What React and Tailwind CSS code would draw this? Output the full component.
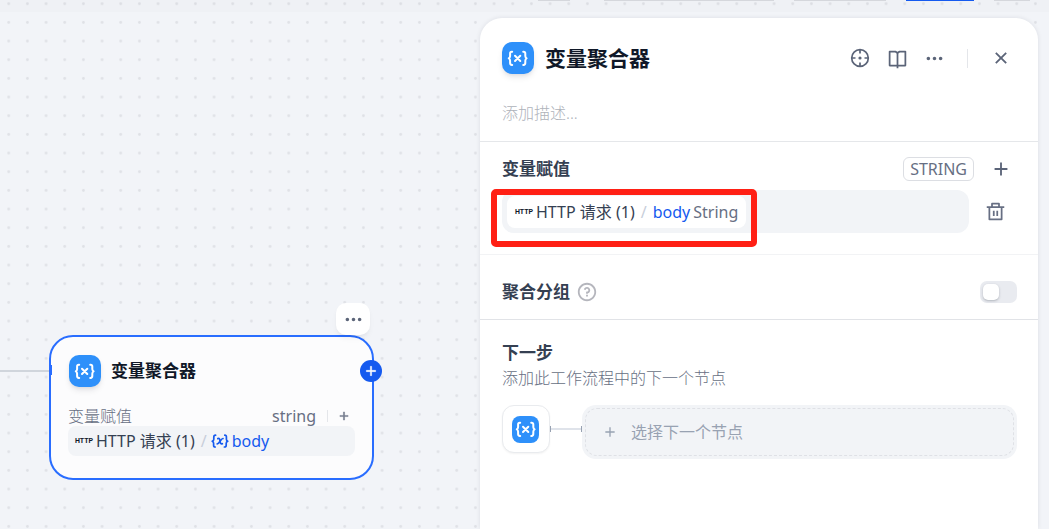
import React from "react";
import {
  RiAddLine,
  RiBookOpenLine,
  RiCloseLine,
  RiDeleteBinLine,
  RiMoreFill,
  RiQuestionLine,
} from "react-icons/ri";

function AggregatorIcon({ className, viewBox = "0 0 32 32" }) {
  return (
    <svg viewBox={viewBox} className={className} fill="none" stroke="white" strokeWidth="2" strokeLinecap="round" strokeLinejoin="round" aria-hidden="true">
      <path d="M10.2 9.7H9.8C8.6 9.7 8.1 10.4 8.1 11.5V13.9C8.1 15.2 7.5 15.8 6.8 16.3C7.5 16.8 8.1 17.4 8.1 18.7V21.1C8.1 22.2 8.6 22.9 9.8 22.9H10.2" />
      <path d="M21.2 9.7H21.6C22.8 9.7 23.3 10.4 23.3 11.5V13.9C23.3 15.2 23.9 15.8 24.6 16.3C23.9 16.8 23.3 17.4 23.3 18.7V21.1C23.3 22.2 22.8 22.9 21.6 22.9H21.2" />
      <path d="M13 13.7L18.3 19M18.3 13.7L13 19" />
    </svg>
  );
}

function VariableIcon() {
  return (
    <svg viewBox="0 0 18 16" className="h-4 w-[18px] shrink-0" fill="none" stroke="currentColor" strokeWidth="1.7" strokeLinecap="round" strokeLinejoin="round" aria-hidden="true">
      <path d="M4.6 2.2C3.2 2.2 2.8 2.9 2.8 4V6.2C2.8 7.2 2.2 7.8 1.2 8.2C2.2 8.6 2.6 9.2 2.6 10.2V12.2C2.6 13.3 3 14 4.2 14" />
      <path d="M13.8 2.2C15.1 2.2 15.5 2.9 15.4 4V6.2C15.4 7.2 15.8 7.8 16.8 8.2C15.8 8.6 15.2 9.2 15.2 10.2V12.2C15.2 13.3 14.8 14 13.4 14" />
      <path d="M6.8 5.6C8.4 5 8.7 6 9 8C9.3 10 9.7 11.4 11.4 10.7M12 5.5C10.2 5.2 8.2 11.2 6.2 10.8" />
    </svg>
  );
}

function LocateIcon() {
  return (
    <svg viewBox="0 0 22 22" className="h-[22px] w-[22px]" fill="none" stroke="currentColor" strokeWidth="1.7" aria-hidden="true">
      <circle cx="11" cy="11" r="8.3" />
      <path d="M11 2.7V6.5M11 15.5V19.3M2.7 11H6.5M15.5 11H19.3" />
      <circle cx="11" cy="11" r="1.6" fill="currentColor" stroke="none" />
    </svg>
  );
}

function HttpMark() {
  return <span className="flex w-[18px] shrink-0 justify-center font-[Roboto,sans-serif] text-[7px] leading-4 font-bold text-[#101828]">HTTP</span>;
}

function DotGrid() {
  return (
    <svg className="absolute inset-0 h-full w-full" aria-hidden="true">
      <defs>
        <pattern id="dots" x="-0.6" y="-5.6" width="18.667" height="18.667" patternUnits="userSpaceOnUse">
          <circle cx="9.33" cy="9.33" r="1.4" fill="#dfe1e6" />
        </pattern>
      </defs>
      <rect width="100%" height="100%" fill="url(#dots)" />
    </svg>
  );
}

function ToolbarEdge() {
  return (
    <div className="absolute top-0 right-0 left-0 flex h-3 items-start justify-end bg-[#101828]/1 pr-[19px]">
      <div className="mr-[34px] h-px w-8 bg-[#d5d7dc]" />
      <div className="mr-5 h-px w-[170px] bg-[#d5d7dc]" />
      <div className="mr-5 h-px w-[92px] bg-[#d5d7dc]" />
      <div className="mr-5 h-px w-[68px] bg-[#155aef]" />
      <div className="h-px w-9 bg-[#d5d7dc]" />
    </div>
  );
}

function AggregatorNode() {
  return (
    <article className="absolute top-[335px] left-[49px] w-[325px] rounded-[24px] border-2 border-[#296dff] bg-[#fcfcfd] px-[17px] pt-[18px] pb-[22px]">
      <span className="absolute top-[28px] -left-[2px] h-[10px] w-[3px] bg-[#296dff]" />
      <button aria-label="更多操作" className="absolute -top-[34px] right-[2px] flex h-8 w-[34px] items-center justify-center rounded-[10px] bg-white text-[#5b6478] shadow-md shadow-gray-900/5">
        <RiMoreFill size={21} />
      </button>
      <button aria-label="添加节点" className="absolute top-[23px] -right-[10px] flex h-[22px] w-[22px] items-center justify-center rounded-full bg-[#155aef] text-white">
        <RiAddLine size={16} strokeWidth="0.6" stroke="currentColor" />
      </button>
      <header className="flex items-center gap-[10px] pl-px">
        <span className="rounded-[10px] bg-[#2e90fa] shadow-md shadow-gray-900/10">
          <AggregatorIcon className="h-8 w-8" />
        </span>
        <h3 className="text-[17px] leading-6 font-bold text-[#101828]">变量聚合器</h3>
      </header>
      <div className="mt-[18px] flex h-[21px] items-center text-base text-[#676f83]">
        <span className="flex-1 font-light">变量赋值</span>
        <span>string</span>
        <span className="ml-[11px] h-3 w-px bg-[#e4e6ea]" />
        <button aria-label="添加变量" className="mr-1 ml-[9px]">
          <RiAddLine size={14} strokeWidth="0.6" stroke="currentColor" />
        </button>
      </div>
      <div className="flex h-[30px] items-center rounded-lg bg-[#f2f4f7] pl-[7px] text-base leading-[30px] text-[#354052]">
        <HttpMark />
        <span className="ml-[3px]">HTTP 请求 (1)</span>
        <span className="mr-1 ml-[6px] text-[#c8ceda]">/</span>
        <span className="flex items-center gap-[3px] text-[#155aef]">
          <VariableIcon />
          body
        </span>
      </div>
    </article>
  );
}

function Panel() {
  return (
    <aside className="z-10 mt-[18px] mr-[11px] w-[558px] shrink-0 rounded-t-[22px] bg-white shadow-[0_0_5px_#10182818]">
      <header className="border-b border-[#e5e7ea] pt-6 pr-[21px] pb-4 pl-[22px]">
        <div className="flex h-8 items-center">
          <span className="rounded-[10px] bg-[#2e90fa] shadow-md shadow-gray-900/10">
            <AggregatorIcon className="h-8 w-8" />
          </span>
          <h2 className="ml-[11px] flex-1 text-[21px] leading-8 font-bold text-[#101828]">变量聚合器</h2>
          <div className="flex items-center text-[#5b6478]">
            <button aria-label="定位节点"><LocateIcon /></button>
            <button aria-label="帮助文档" className="ml-4"><RiBookOpenLine size={21} /></button>
            <button aria-label="更多" className="ml-4"><RiMoreFill size={21} /></button>
            <span className="ml-[22px] h-[19px] w-px bg-[#e4e6ea]" />
            <button aria-label="关闭" className="mr-[5px] ml-[22px]"><RiCloseLine size={22} /></button>
          </div>
        </div>
        <input aria-label="描述" placeholder="添加描述..." className="mt-[27px] block h-6 w-full bg-transparent text-base font-light text-gray-700 outline-none placeholder:text-[#aeb2ba]" />
      </header>

      <section className="border-b border-[#f2f3f5] pt-[15px] pr-[21px] pb-[21px] pl-[22px]">
        <div className="flex h-6 items-center">
          <h3 className="flex-1 text-[17px] leading-6 font-bold text-[#354052]">变量赋值</h3>
          <span className="rounded-md border border-[#dcdee3] px-[6px] text-base leading-[22px] text-[#676f83]">STRING</span>
          <button aria-label="添加变量" className="mr-[5px] ml-4 text-[#5b6478]"><RiAddLine size={22} /></button>
        </div>
        <div className="mt-[9px] flex items-center">
          <div className="relative flex h-[43px] flex-1 items-center rounded-xl bg-[#f2f4f7] pl-[5px]">
            <div className="flex h-8 items-center rounded-lg bg-white pr-2 pl-2 text-base text-[#354052]">
              <HttpMark />
              <span className="ml-[3px]">HTTP 请求 (1)</span>
              <span className="mr-[6px] ml-[6px] text-[#c8ceda]">/</span>
              <span className="text-[#155aef]">body</span>
              <span className="ml-[3px] text-[#676f83]">String</span>
            </div>
            <div className="pointer-events-none absolute -top-px -left-[11px] h-[58px] w-[266px] rounded-[5px] border-[6px] border-[#ff2015]" />
          </div>
          <button aria-label="删除变量" className="mr-[11px] ml-4 text-[#676f83]"><RiDeleteBinLine size={21} /></button>
        </div>
      </section>

      <section className="flex items-center border-b border-[#e1e3e7] pt-[25px] pr-[21px] pb-[15px] pl-[22px]">
        <h3 className="text-[17px] leading-6 font-bold text-[#354052]">聚合分组</h3>
        <RiQuestionLine size={22} className="ml-[6px] text-[#b5b6bd]" />
        <label className="ml-auto block cursor-pointer rounded-[7px] bg-[#e9ebf0] p-[3px]">
          <input type="checkbox" aria-label="聚合分组" className="peer sr-only" />
          <span className="block h-4 w-[31px] peer-checked:pl-[15px]">
            <span className="block h-4 w-4 rounded-[5px] bg-white shadow-sm shadow-gray-900/20" />
          </span>
        </label>
      </section>

      <section className="pt-[21px] pr-[21px] pb-8 pl-[22px]">
        <h3 className="text-[17px] leading-6 font-bold text-[#354052]">下一步</h3>
        <p className="text-base leading-[26px] font-light text-[#676f83]">添加此工作流程中的下一个节点</p>
        <div className="mt-[14px] flex items-start">
          <div className="flex h-12 w-12 items-center justify-center rounded-xl border border-[#e9ebee] bg-white shadow-xs">
            <span className="mr-px rounded-lg bg-[#2e90fa]">
              <AggregatorIcon className="h-[27px] w-[27px]" viewBox="2 3 27 27" />
            </span>
          </div>
          <div className="mt-[21px] flex h-[6px] w-8 items-center">
            <span className="h-[6px] w-px bg-[#98a2b2]" />
            <span className="h-[2px] flex-1 bg-[#dfe3ea]" />
            <span className="h-[6px] w-px bg-[#98a2b2]" />
          </div>
          <button className="h-[54px] flex-1 rounded-[14px] bg-[#f2f4f7] p-[3px] text-base text-[#98a2b2]">
            <span className="flex h-full items-center rounded-xl border border-dashed border-[#dfe1e6] pl-4">
              <RiAddLine size={16} />
              <span className="ml-[13px]">选择下一个节点</span>
            </span>
          </button>
        </div>
      </section>
    </aside>
  );
}

export default function App() {
  return (
    <div className="relative flex min-h-screen bg-[#f2f4f8] font-['Noto_Sans','Noto_Sans_CJK_SC',sans-serif]">
      <DotGrid />
      <ToolbarEdge />
      <main className="relative min-w-0 flex-1">
        <div className="absolute top-[370px] left-0 h-[2px] w-[49px] bg-[#d0d5dc]" />
        <AggregatorNode />
      </main>
      <Panel />
    </div>
  );
}
